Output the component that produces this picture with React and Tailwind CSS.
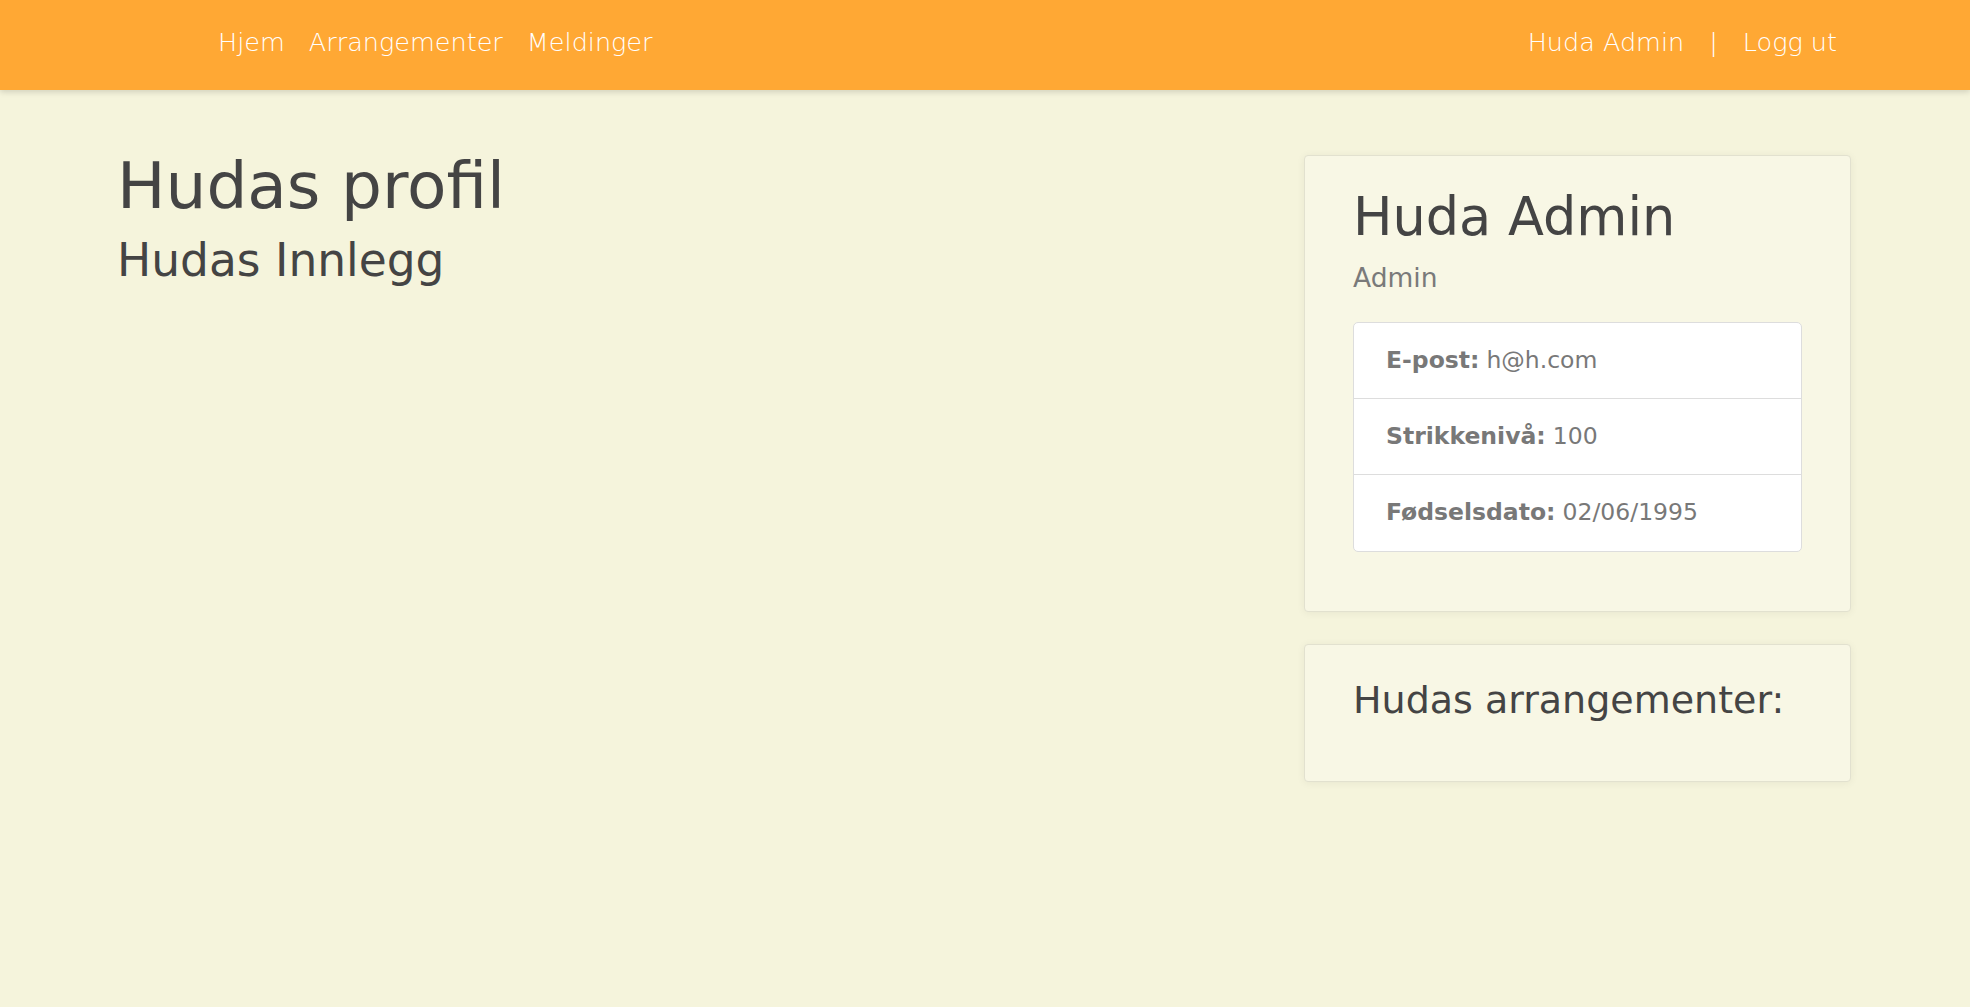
import React from "react";

const font = { fontFamily: '"DejaVu Sans", "Open Sans", sans-serif' };

function InfoRow({ label, value, last }) {
  return (
    <li
      className={`h-[76px] flex items-center pl-[32px] text-[23.5px] text-[#787878] ${
        last ? "" : "border-b border-[#dddddd]"
      }`}
    >
      <span className="font-bold">{label}</span>
      <span className="ml-[7px]">{value}</span>
    </li>
  );
}

export default function App() {
  return (
    <div className="min-h-screen w-full bg-[#f5f4dc]" style={font}>
      {/* Navbar */}
      <nav className="h-[90px] bg-[#ffa834] shadow-[0_2px_6px_rgba(0,0,0,0.15)] flex items-center justify-between pl-[218px] pr-[133px] pb-[5px] relative z-10">
        <div className="flex items-center gap-[24px] text-[25.5px] text-white font-extralight">
          <a>Hjem</a>
          <a>Arrangementer</a>
          <a>Meldinger</a>
        </div>
        <div className="flex items-center text-[25.5px] text-white font-extralight">
          <a>Huda Admin</a>
          <span className="mx-[25px]">|</span>
          <a>Logg ut</a>
        </div>
      </nav>

      {/* Main */}
      <main className="flex justify-between pl-[117px] pr-[119px] pt-[60px]">
        <div>
          <h1 className="text-[64.5px] leading-[72px] text-[#444444]">Hudas profil</h1>
          <h2 className="text-[45.5px] leading-[54px] text-[#444444] mt-[12px]">Hudas Innlegg</h2>
        </div>

        <aside className="w-[547px] mt-[5px] flex flex-col gap-[32px]">
          <div className="bg-[#f8f7e5] border border-[#e2e1cf] rounded-[4px] shadow-[0_1px_8px_rgba(0,0,0,0.06)] px-[48px] pt-[30px] pb-[59px]">
            <h3 className="text-[52.5px] leading-[62px] text-[#444444]">Huda Admin</h3>
            <p className="text-[26.5px] text-[#7a7a7a] mt-[10px]">Admin</p>
            <ul className="mt-[24px] bg-white border border-[#dddddd] rounded-[5px] overflow-hidden">
              <InfoRow label="E-post:" value="h@h.com" />
              <InfoRow label="Strikkenivå:" value="100" />
              <InfoRow label="Fødselsdato:" value="02/06/1995" last />
            </ul>
          </div>

          <div className="bg-[#f8f7e5] border border-[#e2e1cf] rounded-[4px] shadow-[0_1px_8px_rgba(0,0,0,0.06)] px-[48px] pt-[32px] pb-[58px]">
            <h3 className="text-[38px] leading-[46px] text-[#444444]">Hudas arrangementer:</h3>
          </div>
        </aside>
      </main>
    </div>
  );
}
